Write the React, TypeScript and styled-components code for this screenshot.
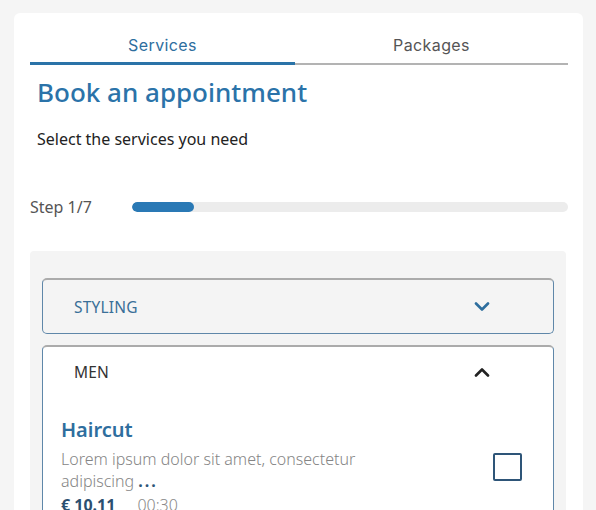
import React, { useState } from 'react';
import styled, { createGlobalStyle } from 'styled-components';

const GlobalStyle = createGlobalStyle`
  html, body {
    margin: 0;
    padding: 0;
    background: #f5f5f5;
    font-family: 'Noto Sans', 'Open Sans', sans-serif;
  }
  * {
    box-sizing: border-box;
  }
`;

const Page = styled.div`
  padding: 13px 13px 0 14px;
  height: 510px;
  overflow: hidden;
`;

const Card = styled.div`
  background: #fff;
  border-radius: 6px;
  padding: 17px 15px 40px 16px;
  min-height: 600px;
`;

const TabBar = styled.div`
  display: flex;
  align-items: flex-end;
`;

const Tab = styled.div<{ $active?: boolean }>`
  flex: 1 1 auto;
  text-align: center;
  padding: 6px 0 ${(p) => (p.$active ? '8px' : '9px')};
  font-family: Inter, 'Liberation Sans', sans-serif;
  font-size: 16px;
  line-height: 18px;
  letter-spacing: 0.4px;
  color: ${(p) => (p.$active ? '#2e6e9e' : '#555')};
  border-bottom: ${(p) => (p.$active ? '3px solid #2a73a8' : '2px solid #b3b3b3')};
  cursor: pointer;
`;

const Heading = styled.h1`
  margin: 11px 0 0 7px;
  font-size: 26px;
  line-height: 32px;
  font-weight: 500;
  color: #2b73a9;
`;

const Subtitle = styled.p`
  margin: 20px 0 0 7px;
  font-size: 16px;
  line-height: 22px;
  color: #222;
`;

const StepRow = styled.div`
  display: flex;
  align-items: center;
  height: 20px;
  margin-top: 47px;
`;

const StepLabel = styled.span`
  width: 102px;
  font-size: 16px;
  color: #555;
`;

const Track = styled.div`
  flex: 1;
  height: 10px;
  border-radius: 5px;
  background: #ececec;
  overflow: hidden;
`;

const Fill = styled.div`
  height: 100%;
  border-radius: 5px;
  background: #2a79b5;
`;

const Panel = styled.div`
  margin-top: 34px;
  margin-right: 2px;
  background: #f4f4f4;
  border-radius: 4px;
  padding: 27px 12px 12px;
  display: flex;
  flex-direction: column;
  gap: 11px;
`;

const Section = styled.div<{ $open?: boolean }>`
  background: ${(p) => (p.$open ? '#fff' : '#f4f4f4')};
  border: 1px solid #5f87a9;
  border-top: 2px solid #ababab;
  border-radius: 5px;
`;

const SectionHeader = styled.div<{ $open?: boolean }>`
  display: flex;
  align-items: center;
  justify-content: space-between;
  height: ${(p) => (p.$open ? '50px' : '53px')};
  padding: 0 63px 0 31px;
  font-size: 15.5px;
  letter-spacing: 0.2px;
  color: ${(p) => (p.$open ? '#333' : '#3a6f98')};
  cursor: pointer;
`;

const SectionBody = styled.div`
  padding: 20px 31px 0 18px;
`;

const ServiceRow = styled.div`
  display: flex;
  align-items: center;
  justify-content: space-between;
`;

const ServiceInfo = styled.div`
  display: flex;
  flex-direction: column;
`;

const ServiceName = styled.h3`
  margin: 0;
  font-size: 20px;
  line-height: 26px;
  font-weight: 600;
  color: #2e6e9e;
`;

const ServiceDesc = styled.p`
  margin: 5px 0 0;
  max-width: 310px;
  font-size: 16px;
  line-height: 22px;
  font-weight: 300;
  color: #858585;
`;

const More = styled.span`
  font-weight: 700;
  color: #2e5578;
  letter-spacing: 2px;
  margin-left: 4px;
`;

const Meta = styled.div`
  display: flex;
  gap: 22px;
  margin-top: 2px;
  font-size: 16px;
  line-height: 22px;
`;

const Price = styled.span`
  font-weight: 700;
  color: #2b4f70;
`;

const Duration = styled.span`
  color: #8a8a8a;
  font-weight: 300;
`;

const Checkbox = styled.div<{ $checked?: boolean }>`
  width: 29px;
  height: 28px;
  border: 2px solid #2e5578;
  border-radius: 2px;
  background: ${(p) => (p.$checked ? '#2e5578' : '#fff')};
  flex-shrink: 0;
  cursor: pointer;
`;

const Chevron: React.FC<{ up?: boolean; color: string }> = ({ up, color }) => (
  <svg width="16" height="10" viewBox="0 0 16 10" fill="none">
    <path
      d={up ? 'M2 8.5L8 2.5L14 8.5' : 'M2 1.5L8 7.5L14 1.5'}
      stroke={color}
      strokeWidth="2.6"
      strokeLinecap="round"
      strokeLinejoin="round"
    />
  </svg>
);

const App: React.FC = () => {
  const [tab, setTab] = useState<'services' | 'packages'>('services');
  const [checked, setChecked] = useState(false);
  const step = 1;
  const total = 7;

  return (
    <>
      <GlobalStyle />
      <Page>
        <Card>
          <TabBar>
            <Tab $active={tab === 'services'} onClick={() => setTab('services')}>
              Services
            </Tab>
            <Tab $active={tab === 'packages'} onClick={() => setTab('packages')}>
              Packages
            </Tab>
          </TabBar>
          <Heading>Book an appointment</Heading>
          <Subtitle>Select the services you need</Subtitle>
          <StepRow>
            <StepLabel>
              Step {step}/{total}
            </StepLabel>
            <Track>
              <Fill style={{ width: `${(step / total) * 100}%` }} />
            </Track>
          </StepRow>
          <Panel>
            <Section>
              <SectionHeader>
                <span>STYLING</span>
                <Chevron color="#2e6e9e" />
              </SectionHeader>
            </Section>
            <Section $open>
              <SectionHeader $open>
                <span>MEN</span>
                <Chevron up color="#222" />
              </SectionHeader>
              <SectionBody>
                <ServiceRow>
                  <ServiceInfo>
                    <ServiceName>Haircut</ServiceName>
                    <ServiceDesc>
                      Lorem ipsum dolor sit amet, consectetur adipiscing
                      <More>...</More>
                    </ServiceDesc>
                    <Meta>
                      <Price>€ 10.11</Price>
                      <Duration>00:30</Duration>
                    </Meta>
                  </ServiceInfo>
                  <Checkbox $checked={checked} onClick={() => setChecked(!checked)} />
                </ServiceRow>
              </SectionBody>
            </Section>
          </Panel>
        </Card>
      </Page>
    </>
  );
};

export default App;
